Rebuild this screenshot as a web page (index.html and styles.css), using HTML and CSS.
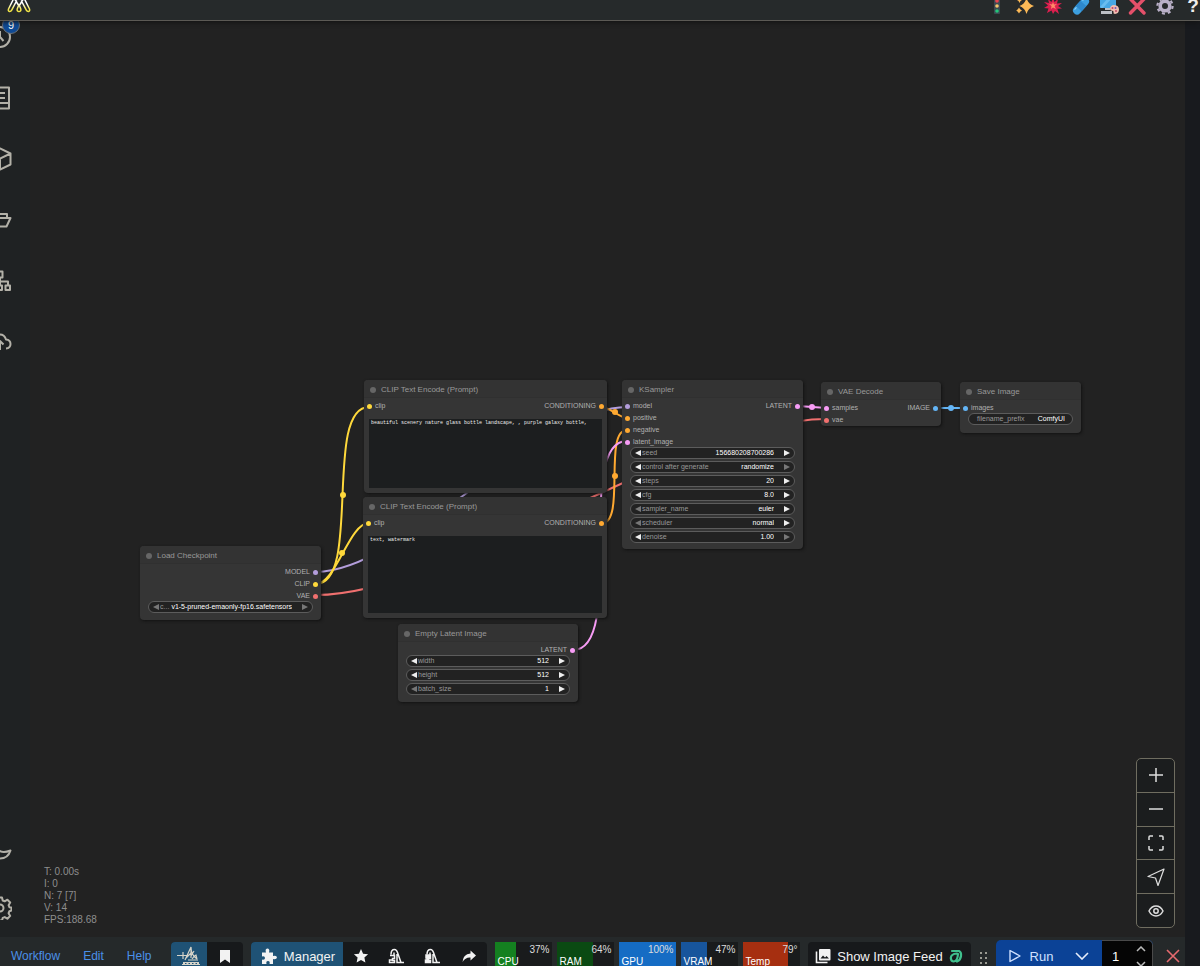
FILE: index.html
```html
<!DOCTYPE html>
<html lang="en">
<head>
    <meta charset="UTF-8">
    <meta name="viewport" content="width=device-width, initial-scale=1.0">
    <title>ComfyUI</title>
    <link rel="stylesheet" href="styles.css">
</head>
<body>
    <header class="topbar">
        <a class="logo" href="#" aria-label="Home">
            <svg width="24" height="18" viewBox="0 0 24 18" fill="none" stroke-width="1.5" stroke-linecap="round" stroke-linejoin="round">
                <defs>
                    <linearGradient id="logoFill" gradientUnits="userSpaceOnUse" x1="0" y1="3" x2="0" y2="17">
                        <stop offset="0.4" stop-color="#ffffff"/>
                        <stop offset="0.8" stop-color="#f2e648"/>
                    </linearGradient>
                </defs>
                <path stroke="url(#logoFill)" d="M7 3 1.500 14q-.6 2.200 1 2.500 1.500.1 2.200-1.300L9.500 6M17 3l5.500 11q.6 2.200-1 2.500-1.500.1-2.200-1.300L14.500 6M7 3l5 8M17 3l-5 8M12 9.500l-1.800 4.500q-.4 2.500 1.800 2.500t1.800-2.500z"/>
            </svg>
        </a>
        <div class="quick-icons">
            <button aria-label="Status">
                <svg width="18" height="18" viewBox="0 0 18 18"><rect x="6" y="0" width="6" height="17" rx="1" fill="#3c4a52"/><circle cx="9" cy="4" r="1.800" fill="#e8434f"/><circle cx="9" cy="9" r="1.800" fill="#f3c56b"/><circle cx="9" cy="14" r="1.800" fill="#23c77a"/></svg>
            </button>
            <button aria-label="Sparkles">
                <svg width="18" height="18" viewBox="0 0 18 18" fill="#fbb957"><path d="M10.500 1q1.600 6 7.500 8-5.900 1.800-7.500 8Q8.900 10.800 3.500 9q5.400-2 7-8z"/><path d="M3 10.500q.8 2.200 3 3-2.200.8-3 3-.8-2.200-3-3 2.200-.8 3-3zM3.500 0q.7 2.300 2.500 3-1.800.7-2.500 3-.7-2.300-2.500-3 1.800-.7 2.500-3z"/></svg>
            </button>
            <button aria-label="Burst">
                <svg width="18" height="18" viewBox="0 0 18 18"><path fill="#dc1f4f" d="m9 0 1.500 5L14 2l-1 4.500 5-.5-4 3 4 2.500-4.700.2L15 17l-4-3-2 3-1.500-3.500L3 16l1.500-4.500L0 11l4-2.500L0 5l5 1-1-4 3.500 3z"/><path fill="#ff8a66" d="m9 5 1 2.500 3-.5-2.500 2 1.500 3-3-1.500L7 12l.5-3L5 7l3 .5z"/></svg>
            </button>
            <button aria-label="Clean">
                <svg width="18" height="18" viewBox="0 0 18 18"><g transform="rotate(-48 9 9)"><rect x="-1" y="5" width="20" height="8" rx="4" fill="#3c9fe0"/><rect x="5.500" y="5" width="7" height="8" fill="#2d88cc"/><path d="M2 6.500h3M14 6.500h3" stroke="#8fd0f7" stroke-width="1.200"/></g></svg>
            </button>
            <button aria-label="Theme">
                <svg width="20" height="18" viewBox="0 0 20 18"><rect x="1" y="0" width="16" height="11" rx="1" fill="#46a7e4"/><path d="m1 10 9-10h4L4 11H2z" fill="#69bdf0"/><path d="M6 11h5v2H6zM2 14h11v3H2z" fill="#bcc0c6"/><path d="M15 8q5 .3 5 4.500t-4 4.500q-2 0-1.500-2 .2-1.300-1.500-1.300-2 0-2-1.700 0-3.700 4-4z" fill="#efbcb0"/><circle cx="13.500" cy="11" r="1" fill="#c34863"/><circle cx="16.500" cy="11" r="1" fill="#6b5cc0"/><circle cx="17" cy="14" r="1" fill="#c34863"/></svg>
            </button>
            <button aria-label="Clear">
                <svg width="18" height="18" viewBox="0 0 18 18" fill="none" stroke="#e4506a" stroke-width="3.400" stroke-linecap="round"><path d="m2.500 2 13.500 14M16 2 2.500 16"/></svg>
            </button>
            <button aria-label="Settings">
                <svg width="18" height="18" viewBox="0 0 18 18" fill="none" stroke="#b9b0c8"><circle cx="9" cy="9" r="4.800" stroke-width="3.600"/><circle cx="9" cy="9" r="7.600" stroke-width="2.200" stroke-dasharray="3 2.970"/></svg>
            </button>
            <button class="help" aria-label="Help">?</button>
        </div>
    </header>

    <div class="shell">
        <div class="main">
            <div class="workspace">
                <nav class="sidebar" aria-label="Panels">
                    <div class="side-top">
                        <button aria-label="Queue">
                            <svg width="24" height="24" viewBox="0 0 24 24"><circle cx="12" cy="12" r="10"/><path d="M12 6v6l3.500 4"/></svg>
                            <span class="badge">9</span>
                        </button>
                        <button aria-label="Node library">
                            <svg width="24" height="24" viewBox="0 0 24 24"><path d="M3 1.500h18v21H3zM6 7h11M6 12h11M3 17h18"/></svg>
                        </button>
                        <button aria-label="Models">
                            <svg width="24" height="24" viewBox="0 0 24 24"><path d="m12 1.500 10.500 5v11L12 22.500 1.500 17.500v-11zM1.500 6.500 12 11.500l10.500-5M12 11.500v11"/></svg>
                        </button>
                        <button aria-label="Workflows">
                            <svg width="24" height="24" viewBox="0 0 24 24"><path d="M2 16V5h6l1 1h10v4M2 18.500 5 10h17.500l-4 8.500z"/></svg>
                        </button>
                        <button aria-label="Node map">
                            <svg width="24" height="24" viewBox="0 0 24 24"><path d="M9 2.500h5.500v6H9zM1.500 16.500h4.500v4.500H1.500zM9.500 16.500H14v4.500H9.500zM17.500 16.500H22v4.500h-4.500zM12 9v7M4 16v-3.500h16V16"/></svg>
                        </button>
                        <button aria-label="Upload">
                            <svg width="24" height="24" viewBox="0 0 24 24"><path d="M7 18H5q-3.500-.8-3.500-4t4-4.500q1.500-5 6.500-5 4.500 0 6 5 4.500.5 4.500 4.500T18 18.500M12 20v-8M8.500 14.500 12 11l3.500 3.500"/></svg>
                        </button>
                    </div>
                    <div class="side-bottom">
                        <button aria-label="Toggle theme">
                            <svg width="24" height="24" viewBox="0 0 24 24"><path d="M9 8q4.500 5 13.500 1.500Q20 17.500 12 17.500 5 17 2 12"/></svg>
                        </button>
                        <button aria-label="Preferences">
                            <svg width="24" height="24" viewBox="0 0 24 24"><circle cx="12" cy="12" r="3.500"/><path d="m10 1.500-.7 3-2 .8-2.700-1.600-2.800 2.800 1.600 2.700-.8 2-2 .3v3l2 .7.800 2-1.600 2.700 2.800 2.800 2.700-1.600 2 .8.700 2.600h4l.7-2.600 2-.8 2.700 1.600 2.800-2.800-1.600-2.700.8-2 2-.7v-3l-2-.3-.8-2 1.600-2.700-2.800-2.800-2.700 1.600-2-.8-.7-3z"/></svg>
                        </button>
                    </div>
                </nav>

                <main class="canvas">
                    <!-- links between the nodes, drawn under them -->
                    <svg class="links" width="1155" height="916" viewBox="30 21 1155 916" aria-hidden="true">
                        <g class="link model"><path d="M316 572C404 572 539 407 627 407"/></g>
                        <g class="link clip"><path d="M316 584C362 584 323 407 369 407"/><circle cx="343" cy="495" r="3"/></g>
                        <g class="link clip"><path d="M316 584C336 584 349 523 369 523"/><circle cx="342" cy="553" r="3"/></g>
                        <g class="link vae"><path d="M316 595C451 595 691 419 826 419"/></g>
                        <g class="link cond"><path d="M602 407C609 407 620 418 627 418"/><circle cx="615" cy="412" r="3"/></g>
                        <g class="link cond"><path d="M602 523C626 523 603 430 627 430"/><circle cx="615" cy="476" r="3"/></g>
                        <g class="link latent"><path d="M573 650C627 650 573 441 627 441"/></g>
                        <g class="link latent"><path d="M798 406 827 408"/><circle cx="812" cy="407" r="3"/></g>
                        <g class="link image"><path d="M937 408H966"/><circle cx="951" cy="408" r="3"/></g>
                    </svg>

                    <section class="node load-checkpoint">
                        <h2>Load Checkpoint</h2>
                        <div class="slots">
                            <div class="slot"><span class="out model">MODEL</span></div>
                            <div class="slot"><span class="out clip">CLIP</span></div>
                            <div class="slot"><span class="out vae">VAE</span></div>
                        </div>
                        <div class="widgets">
                            <div class="widget"><button class="prev off" aria-label="Previous"></button><label for="ckpt">c...</label><select id="ckpt"><option>v1-5-pruned-emaonly-fp16.safetensors</option></select><button class="next off" aria-label="Next"></button></div>
                        </div>
                    </section>

                    <section class="node clip-positive">
                        <h2>CLIP Text Encode (Prompt)</h2>
                        <div class="slots">
                            <div class="slot"><span class="in clip">clip</span><span class="out cond">CONDITIONING</span></div>
                        </div>
                        <textarea aria-label="Positive prompt" spellcheck="false">beautiful scenery nature glass bottle landscape, , purple galaxy bottle,</textarea>
                    </section>

                    <section class="node clip-negative">
                        <h2>CLIP Text Encode (Prompt)</h2>
                        <div class="slots">
                            <div class="slot"><span class="in clip">clip</span><span class="out cond">CONDITIONING</span></div>
                        </div>
                        <textarea aria-label="Negative prompt" spellcheck="false">text, watermark</textarea>
                    </section>

                    <section class="node empty-latent">
                        <h2>Empty Latent Image</h2>
                        <div class="slots">
                            <div class="slot"><span class="out latent">LATENT</span></div>
                        </div>
                        <div class="widgets">
                            <div class="widget"><button class="prev" aria-label="Less"></button><label for="width">width</label><input id="width" value="512"><button class="next" aria-label="More"></button></div>
                            <div class="widget"><button class="prev" aria-label="Less"></button><label for="height">height</label><input id="height" value="512"><button class="next" aria-label="More"></button></div>
                            <div class="widget"><button class="prev off" aria-label="Less"></button><label for="batch">batch_size</label><input id="batch" value="1"><button class="next" aria-label="More"></button></div>
                        </div>
                    </section>

                    <section class="node ksampler">
                        <h2>KSampler</h2>
                        <div class="slots">
                            <div class="slot"><span class="in model">model</span><span class="out latent">LATENT</span></div>
                            <div class="slot"><span class="in cond">positive</span></div>
                            <div class="slot"><span class="in cond">negative</span></div>
                            <div class="slot"><span class="in latent">latent_image</span></div>
                        </div>
                        <div class="widgets">
                            <div class="widget"><button class="prev" aria-label="Less"></button><label for="seed">seed</label><input id="seed" value="156680208700286"><button class="next" aria-label="More"></button></div>
                            <div class="widget"><button class="prev" aria-label="Previous"></button><label for="control">control after generate</label><select id="control"><option>randomize</option></select><button class="next off" aria-label="Next"></button></div>
                            <div class="widget"><button class="prev" aria-label="Less"></button><label for="steps">steps</label><input id="steps" value="20"><button class="next" aria-label="More"></button></div>
                            <div class="widget"><button class="prev" aria-label="Less"></button><label for="cfg">cfg</label><input id="cfg" value="8.0"><button class="next" aria-label="More"></button></div>
                            <div class="widget"><button class="prev off" aria-label="Previous"></button><label for="sampler">sampler_name</label><select id="sampler"><option>euler</option></select><button class="next" aria-label="Next"></button></div>
                            <div class="widget"><button class="prev off" aria-label="Previous"></button><label for="scheduler">scheduler</label><select id="scheduler"><option>normal</option></select><button class="next" aria-label="Next"></button></div>
                            <div class="widget"><button class="prev" aria-label="Less"></button><label for="denoise">denoise</label><input id="denoise" value="1.00"><button class="next off" aria-label="More"></button></div>
                        </div>
                    </section>

                    <section class="node vae-decode">
                        <h2>VAE Decode</h2>
                        <div class="slots">
                            <div class="slot"><span class="in latent">samples</span><span class="out image">IMAGE</span></div>
                            <div class="slot"><span class="in vae">vae</span></div>
                        </div>
                    </section>

                    <section class="node save-image">
                        <h2>Save Image</h2>
                        <div class="slots">
                            <div class="slot"><span class="in image">images</span></div>
                        </div>
                        <div class="widgets">
                            <div class="widget text"><label for="prefix">filename_prefix</label><input id="prefix" value="ComfyUI"></div>
                        </div>
                    </section>

                    <div class="stats">
                        <div>T: 0.00s</div>
                        <div>I: 0</div>
                        <div>N: 7 [7]</div>
                        <div>V: 14</div>
                        <div>FPS:188.68</div>
                    </div>

                    <div class="zoom-tools">
                        <button aria-label="Zoom in"><svg width="18" height="18" viewBox="0 0 18 18"><path d="M9 2v14M2 9h14"/></svg></button>
                        <button aria-label="Zoom out"><svg width="18" height="18" viewBox="0 0 18 18"><path d="M2 9h14"/></svg></button>
                        <button aria-label="Fit view"><svg width="18" height="18" viewBox="0 0 18 18"><path d="M2 6V3q0-1 1-1h3M12 2h3q1 0 1 1v3M16 12v3q0 1-1 1h-3M6 16H3q-1 0-1-1v-3"/></svg></button>
                        <button aria-label="Select mode"><svg width="18" height="18" viewBox="0 0 18 18"><path stroke-width="1.200" d="M17 1 1 8.500l7.500 1.500L11 17.500z"/></svg></button>
                        <button aria-label="Toggle links"><svg width="18" height="18" viewBox="0 0 18 18"><path d="M2 9q2.500-5 7-5t7 5q-2.500 5-7 5T2 9z"/><circle cx="9" cy="9" r="2.200"/></svg></button>
                    </div>
                </main>
            </div>

            <footer class="bottombar">
                <div class="menu">
                    <button>Workflow</button>
                    <button>Edit</button>
                    <button>Help</button>
                </div>
                <div class="group">
                    <button class="tool primary" aria-label="Crystools">
                        <svg width="24" height="20" viewBox="0 0 24 20" fill="none" stroke="#d6d3c8" stroke-width="1.200"><path d="M0 9.500h11M6 6v7M5 18.500h18M6 16.500h16M8 14l6-13v11M14 1q0 8 6 12M9 12l5-5M17 5l-3 5M15 13q2-3 4-4l1 4M11 14h10"/><path stroke-dasharray="2 1.500" d="M6 17.500h16"/></svg>
                    </button>
                    <button class="tool" aria-label="Bookmark">
                        <svg width="12" height="14" viewBox="0 0 12 14" fill="#f2f2f2"><path d="M1 1h10v13l-5-3.500L1 14z"/></svg>
                    </button>
                </div>
                <div class="group">
                    <button class="manager primary">
                        <svg width="16" height="16" viewBox="0 0 16 16" fill="#f2f2f2"><path d="M1 4.500h4q-1.200-3.500 1.200-4 3 .3 1.800 4h4v3.500q3.500-1 4 1.200-.3 2.600-4 1.800v5H8.500q.8-3-1.500-3t-1.500 3H1v-4.500q3 .7 3-1.500T1 8.500z"/></svg>
                        Manager
                    </button>
                    <button class="tool" aria-label="Favourites"><svg width="16" height="16" viewBox="0 0 16 16" fill="#f2f2f2"><path d="m8 1 2.100 4.700 5 .5-3.700 3.400 1 5L8 12l-4.400 2.600 1-5L.9 6.200l5-.5z"/></svg></button>
                    <button class="tool" aria-label="Unload models"><svg width="17" height="17" viewBox="0 0 17 17" fill="none" stroke="#f2f2f2" stroke-width="1.500"><path d="M3 6.500Q3 1.500 6.500 1.500q2 0 3 3L13 14.500h3M9 6v8.500h4M6 4.500v3M2 7.500h4.500v3H4.500v2h2v2h-5v-2.500H4"/></svg></button>
                    <button class="tool" aria-label="Free cache"><svg width="17" height="17" viewBox="0 0 17 17" fill="none" stroke="#f2f2f2" stroke-width="1.500"><path d="M3 6.500Q3 1.500 6.500 1.500q2 0 3 3L13 14.500h3M9 6v8.500h4M6 4.500v3"/><path fill="#f2f2f2" d="M2 7h4.500v3.500H4.500v2h2v2h-5v-2.500H3V10H2z"/></svg></button>
                    <button class="tool" aria-label="Share"><svg width="14" height="14" viewBox="0 0 14 14" fill="#f2f2f2"><path d="m8.500 1.500 5.500 5-5.500 5V8.500Q3.500 8 .5 13 1 5 8.500 4.500z"/></svg></button>
                </div>
                <div class="monitors">
                    <div class="monitor cpu"><span class="fill" style="width: 37%"></span><span class="value">37%</span><span class="name">CPU</span></div>
                    <div class="monitor ram"><span class="fill" style="width: 64%"></span><span class="value">64%</span><span class="name">RAM</span></div>
                    <div class="monitor gpu"><span class="fill" style="width: 100%"></span><span class="value">100%</span><span class="name">GPU</span></div>
                    <div class="monitor vram"><span class="fill" style="width: 47%"></span><span class="value">47%</span><span class="name">VRAM</span></div>
                    <div class="monitor temp"><span class="fill" style="width: 79%"></span><span class="value">79°</span><span class="name">Temp</span></div>
                </div>
                <button class="feed">
                    <svg width="16" height="16" viewBox="0 0 16 16"><path d="M1.500 3.500v11h11" fill="none" stroke="#f2f2f2" stroke-width="1.600"/><rect x="4" y="1" width="11.500" height="11.500" rx="1" fill="#f2f2f2"/><path d="m5.500 10.500 2.500-3 2 2 1.500-1.500 2.500 2.500z" fill="#17191b"/></svg>
                    Show Image Feed
                    <svg width="14" height="14" viewBox="0 0 14 14" fill="none" stroke="#3fc08d" stroke-width="2.200" stroke-linecap="round"><path d="M3 2h7q2.500 1 2 5t-4 5.500M8 4.500Q2 5 1.800 9q.2 3.500 3 3.500Q8.500 12 9 5"/></svg>
                </button>
                <svg class="grip" width="9" height="14" viewBox="0 0 9 14" fill="#9a9a92"><path d="M1 1h2v2H1zM6 1h2v2H6zM1 6h2v2H1zM6 6h2v2H6zM1 11h2v2H1zM6 11h2v2H6z"/></svg>
                <div class="run-group">
                    <button class="run">
                        <svg width="12" height="14" viewBox="0 0 12 14" fill="none" stroke="#cfe0ff" stroke-width="1.400" stroke-linejoin="round"><path d="M1 1.500v11L11 7z"/></svg>
                        Run
                    </button>
                    <button class="run-more" aria-label="Run options">
                        <svg width="14" height="8" viewBox="0 0 14 8" fill="none" stroke="#e6edfa" stroke-width="1.600"><path d="m1 1 6 6 6-6"/></svg>
                    </button>
                    <div class="batch">
                        <input aria-label="Batch count" value="1">
                        <div class="steppers">
                            <button aria-label="Increase"><svg width="10" height="6" viewBox="0 0 10 6"><path d="m1 5 4-4 4 4"/></svg></button>
                            <button aria-label="Decrease"><svg width="10" height="6" viewBox="0 0 10 6"><path d="m1 1 4 4 4-4"/></svg></button>
                        </div>
                    </div>
                </div>
                <button class="cancel" aria-label="Cancel">
                    <svg width="14" height="14" viewBox="0 0 14 14" fill="none" stroke="#e66a6f" stroke-width="1.600"><path d="m1 1 12 12M13 1 1 13"/></svg>
                </button>
            </footer>
        </div>
        <aside class="edge"></aside>
    </div>
</body>
</html>
```
FILE: styles.css
```css
*{
    box-sizing: border-box;
}
body{
    margin: 0;
    height: 100vh;
    display: flex;
    flex-direction: column;
    overflow: hidden;
    background-color: #222222;
    color: #dddddd;
    font-family: "Liberation Sans", Arial, sans-serif;
    font-size: 13px;
}
button{
    display: flex;
    align-items: center;
    justify-content: center;
    padding: 0;
    border: 0;
    background: none;
    color: inherit;
    font: inherit;
}
svg{
    flex: none;
}

/* top bar */
.topbar{
    flex: none;
    display: flex;
    align-items: center;
    justify-content: space-between;
    height: 21px;
    padding: 0 0 8px 7px;
    border-bottom: 1px solid #5c5a55;
    background-color: #262a2b;
    box-shadow: 0 1px 5px #111111;
    overflow: hidden;
    z-index: 2;
}
.logo{
    display: flex;
    margin-top: -4px;
}
.quick-icons{
    display: flex;
    margin-right: -7px;
}
.quick-icons button{
    width: 28px;
    height: 18px;
}
.quick-icons .help{
    font-size: 19px;
    font-weight: bold;
    line-height: 18px;
    color: #eeeeee;
}

.shell{
    flex: 1;
    min-height: 0;
    display: flex;
}
.main{
    flex: 1;
    min-width: 0;
    display: flex;
    flex-direction: column;
}
.edge{
    width: 15px;
    background-color: #181a1e;
}
.workspace{
    flex: 1;
    min-height: 0;
    display: flex;
    overflow: hidden;
}

/* sidebar */
.sidebar{
    width: 30px;
    display: flex;
    flex-direction: column;
    justify-content: space-between;
    background-color: #1f2223;
}
.side-top, .side-bottom{
    width: 24px;
    margin-left: -12px;
}
.side-top{
    margin-top: -15px;
}
.side-bottom{
    margin-bottom: 2px;
}
.sidebar button{
    position: relative;
    width: 24px;
    height: 61px;
}
.side-bottom button{
    height: 55px;
}
.sidebar svg{
    fill: none;
    stroke: #b3b1a8;
    stroke-width: 2;
    stroke-linejoin: round;
}
.badge{
    position: absolute;
    top: 10px;
    left: 14px;
    width: 18px;
    height: 18px;
    border: 1px solid #6a7078;
    border-radius: 9px;
    background-color: #0f4a94;
    color: #ffffff;
    font-size: 11px;
    line-height: 16px;
    text-align: center;
}

/* canvas */
.canvas{
    position: relative;
    flex: 1;
    overflow: hidden;
}
.links{
    position: absolute;
    top: 0;
    left: 0;
}
.link path{
    fill: none;
    stroke: currentColor;
    stroke-width: 2;
}
.link circle{
    fill: currentColor;
}
.model{ color: #b39ddb; }
.clip{ color: #ffd93b; }
.vae{ color: #f0706f; }
.cond{ color: #ffa931; }
.latent{ color: #f79cf5; }
.image{ color: #64b5f6; }

.node{
    position: absolute;
    display: flex;
    flex-direction: column;
    border-radius: 4px;
    background-color: #353535;
    box-shadow: 1px 1px 3px #111111;
    font-size: 7px;
}
.load-checkpoint{ left: 110px; top: 525px; width: 181px; height: 74px; }
.clip-positive{ left: 334px; top: 359px; width: 243px; height: 113px; }
.clip-negative{ left: 333px; top: 476px; width: 244px; height: 121px; }
.empty-latent{ left: 368px; top: 603px; width: 180px; height: 78px; }
.ksampler{ left: 592px; top: 359px; width: 181px; height: 169px; }
.vae-decode{ left: 791px; top: 361px; width: 120px; height: 44px; }
.save-image{ left: 930px; top: 361px; width: 121px; height: 51px; }

.node h2{
    display: flex;
    align-items: center;
    gap: 5px;
    height: 18px;
    margin: 0;
    padding: 2px 0 0 6px;
    border-bottom: 1px solid #303030;
    border-radius: 4px 4px 0 0;
    background-color: #333333;
    color: #999999;
    font-size: 8px;
    font-weight: normal;
}
.node h2::before{
    content: "";
    width: 6px;
    height: 6px;
    border-radius: 3px;
    background-color: #666666;
}
.slots{
    padding: 2px 3px 0;
}
.slot{
    display: flex;
    height: 12px;
    line-height: 12px;
}
.in, .out{
    display: flex;
    align-items: center;
    gap: 3px;
}
.out{
    flex-direction: row-reverse;
    margin-left: auto;
}
.in::before, .out::before{
    content: "";
    width: 5px;
    height: 5px;
    border-radius: 3px;
    background-color: currentColor;
}
/* the dot takes the type colour, the label stays grey */
.in, .out{
    -webkit-text-fill-color: #b0b0b0;
}
.widgets{
    display: flex;
    flex-direction: column;
    gap: 2px;
    margin-top: -1px;
    padding: 0 8px;
}
.widget{
    display: flex;
    align-items: center;
    height: 12px;
    padding: 0 4px;
    border: 1px solid #5c5c5c;
    border-radius: 6px;
    background-color: #222222;
}
.widget label{
    flex: none;
    height: 10px;
    margin-left: 1px;
    color: #999999;
    line-height: 10px;
}
.widget input, .widget select{
    flex: 1;
    min-width: 0;
    height: 10px;
    margin: 0 10px 0 0;
    padding: 0;
    border: 0;
    background: none;
    color: #ffffff;
    font: inherit;
    line-height: 10px;
    text-align: right;
    text-align-last: right;
    appearance: none;
}
.widget.text{
    padding: 0 7px;
}
.widget.text input{
    margin-right: 0;
}
.prev, .next{
    flex: none;
    width: 0;
    height: 0;
    border-top: 3px solid transparent;
    border-bottom: 3px solid transparent;
}
.prev{ border-right: 6px solid #eeeeee; }
.next{ border-left: 6px solid #eeeeee; }
.prev.off{ border-right-color: #777777; }
.next.off{ border-left-color: #777777; }

.node textarea{
    flex: 1;
    margin: 7px 5px 5px;
    padding: 0 2px;
    border: 0;
    background-color: #1c1e1f;
    color: #eeeeee;
    font-family: "Liberation Mono", monospace;
    font-size: 5px;
    line-height: 8px;
    resize: none;
}

.stats{
    position: absolute;
    left: 14px;
    bottom: 11px;
    color: #8e8e8e;
    font-size: 10px;
    line-height: 12px;
}
.zoom-tools{
    position: absolute;
    right: 10px;
    bottom: 9px;
    display: flex;
    flex-direction: column;
    width: 39px;
    height: 170px;
    border: 1px solid #6f6d60;
    border-radius: 5px;
    background-color: #1b1d1e;
}
.zoom-tools button{
    flex: 1;
}
.zoom-tools button + button{
    border-top: 1px solid #6f6d60;
}
.zoom-tools svg{
    fill: none;
    stroke: #dedede;
    stroke-width: 1.500;
    stroke-linejoin: round;
}

/* bottom bar */
.bottombar{
    flex: none;
    display: flex;
    align-items: flex-start;
    gap: 8px;
    height: 29px;
    padding-top: 5px;
    background-color: #25292a;
    overflow: hidden;
}
.bottombar > *{
    flex: none;
    height: 28px;
}
.menu{
    display: flex;
    gap: 1px;
    color: #4a90e8;
    font-size: 12px;
}
.menu button{
    padding: 0 11px;
}
.group{
    display: flex;
    border-radius: 4px;
    background-color: #17191b;
    color: #f2f2f2;
    overflow: hidden;
}
.tool{
    width: 36px;
}
.primary{
    background-color: #1f5275;
}
.manager{
    width: 92px;
    padding-left: 3px;
    gap: 7px;
}
.monitors{
    display: flex;
    gap: 5px;
}
.monitor{
    position: relative;
    display: flex;
    flex-direction: column;
    width: 57px;
    padding: 2px 2px 0 3px;
    background-color: #191b1c;
    font-size: 10px;
    line-height: 12px;
}
.fill{
    position: absolute;
    top: 0;
    left: 0;
    height: 100%;
}
.value, .name{
    position: relative;
}
.value{
    text-align: right;
}
.name{
    color: #ffffff;
}
.cpu .fill{ background-color: #148020; }
.ram .fill{ background-color: #0a4a12; }
.gpu .fill{ background-color: #156cc4; }
.vram .fill{ background-color: #17559c; }
.temp .fill{ background-color: #a62f10; }
.feed{
    width: 163px;
    gap: 6px;
    border-radius: 4px;
    background-color: #17191b;
    color: #f2f2f2;
}
.grip{
    margin-top: 9px;
}
.bottombar .grip{
    height: 14px;
}
.bottombar .run-group{
    display: flex;
    height: 32px;
    margin-top: -2px;
    border-radius: 5px;
    overflow: hidden;
    background-color: #0b4296;
    color: #cfe0ff;
}
.run{
    width: 66px;
    padding-left: 5px;
    gap: 9px;
}
.run-more{
    width: 40px;
}
.batch{
    display: flex;
    width: 51px;
    border: 1px solid #4a4a4a;
    border-left: 0;
    border-radius: 0 5px 5px 0;
    background-color: #050505;
}
.batch input{
    width: 28px;
    padding: 0;
    border: 0;
    background: none;
    color: #ffffff;
    font: inherit;
    text-align: center;
}
.steppers{
    flex: 1;
    display: flex;
    flex-direction: column;
}
.steppers button{
    flex: 1;
}
.steppers svg{
    fill: none;
    stroke: #bbbbbb;
    stroke-width: 1.500;
}
.cancel{
    width: 24px;
}
```
